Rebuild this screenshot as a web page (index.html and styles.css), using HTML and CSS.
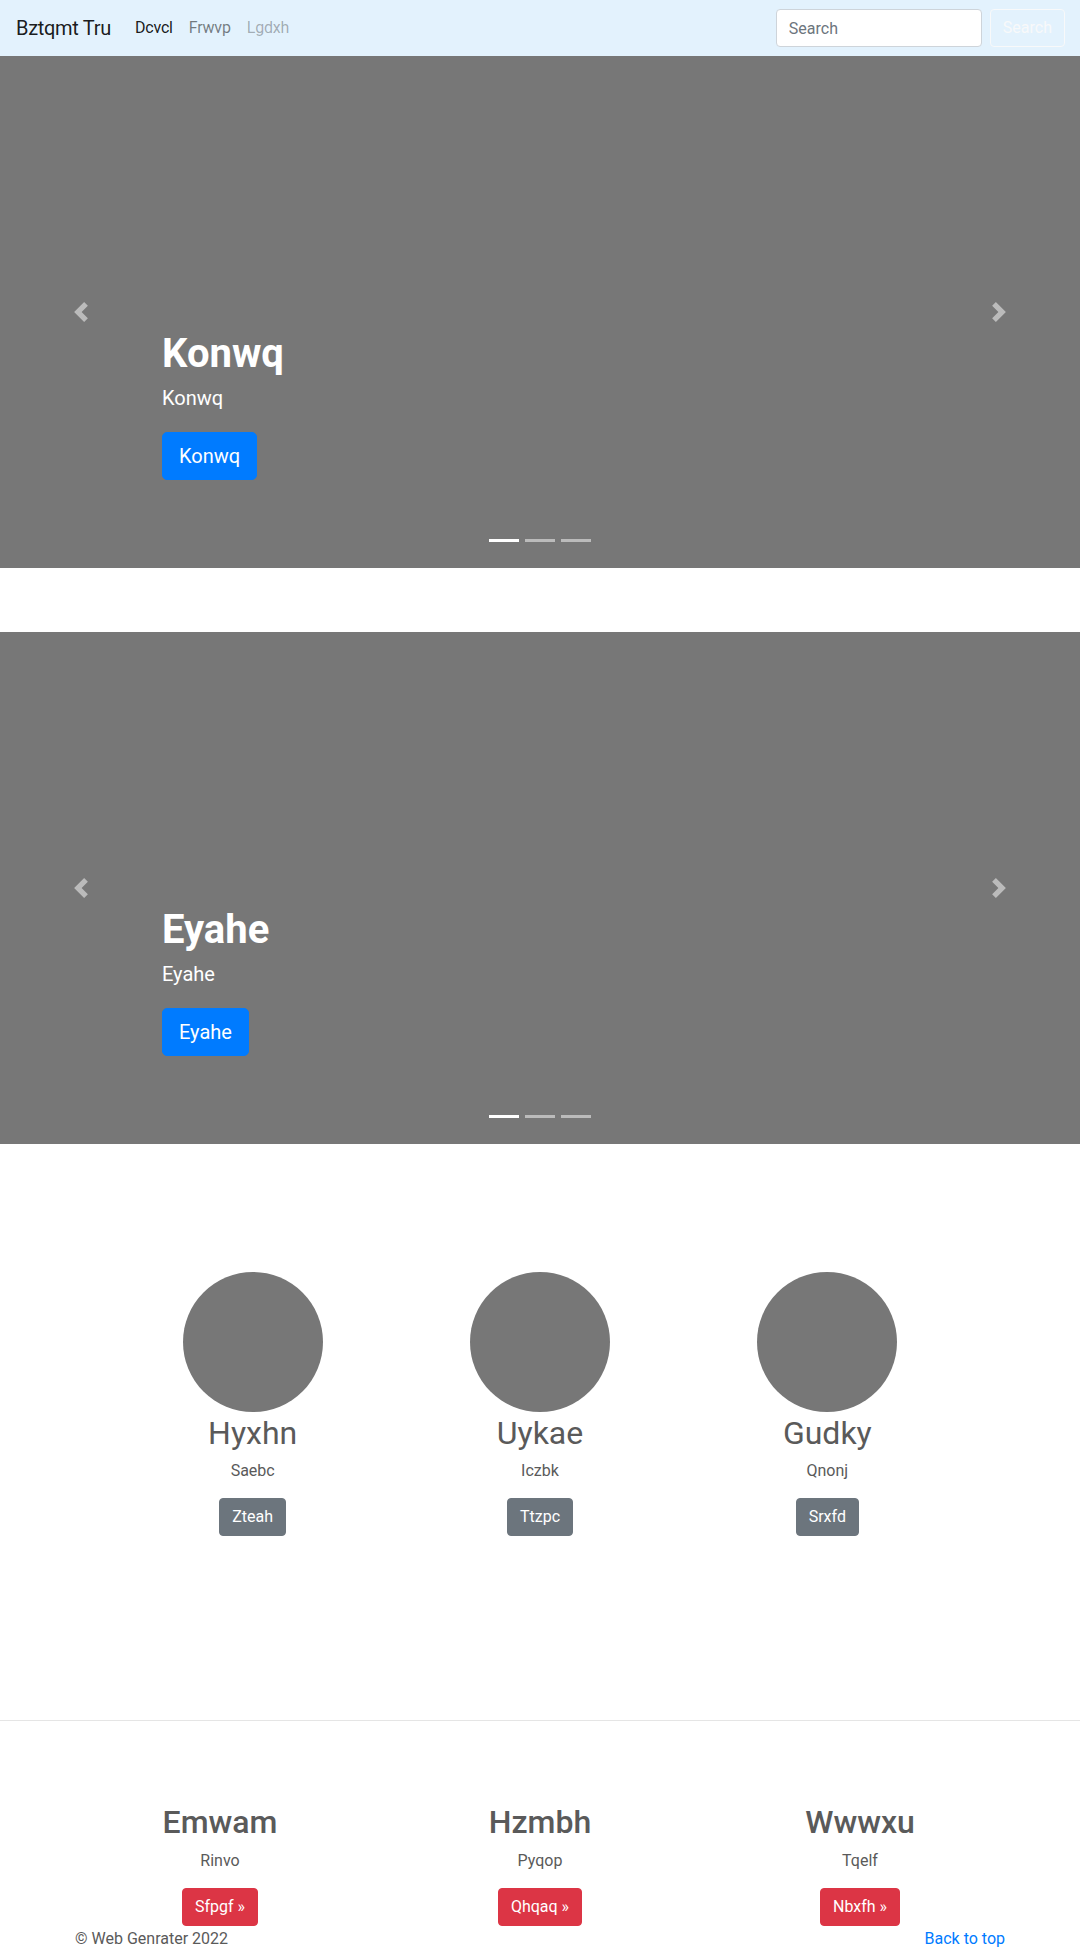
FILE: index.html
```html
<!DOCTYPE html>
<html lang="en">
<head>
<meta charset="utf-8">
<title>Bztqmt Tru</title>
<link rel="stylesheet" href="styles.css">
</head>
<body>
<header class="navbar">
  <a class="brand" href="#">Bztqmt Tru</a>
  <nav class="nav">
    <a class="nav-link active" href="#">Dcvcl</a>
    <a class="nav-link" href="#">Frwvp</a>
    <a class="nav-link disabled" href="#">Lgdxh</a>
  </nav>
  <form class="search">
    <input class="search-input" type="text" placeholder="Search">
    <button class="btn btn-outline-light" type="button">Search</button>
  </form>
</header>

<main>
  <section class="carousel">
    <a class="control control-prev" href="#"><svg width="20" height="20" viewBox="0 0 8 8"><path fill="#fff" d="M5.25 0l-4 4 4 4 1.5-1.5L4.25 4l2.5-2.5L5.25 0z"/></svg></a>
    <a class="control control-next" href="#"><svg width="20" height="20" viewBox="0 0 8 8"><path fill="#fff" d="M2.75 0l-1.5 1.5L3.75 4l-2.5 2.5L2.75 8l4-4-4-4z"/></svg></a>
    <div class="caption">
      <h1 class="caption-title">Konwq</h1>
      <p class="caption-text">Konwq</p>
      <a class="btn btn-lg btn-primary" href="#">Konwq</a>
    </div>
    <ol class="indicators">
      <li class="active"></li>
      <li></li>
      <li></li>
    </ol>
  </section>

  <section class="carousel">
    <a class="control control-prev" href="#"><svg width="20" height="20" viewBox="0 0 8 8"><path fill="#fff" d="M5.25 0l-4 4 4 4 1.5-1.5L4.25 4l2.5-2.5L5.25 0z"/></svg></a>
    <a class="control control-next" href="#"><svg width="20" height="20" viewBox="0 0 8 8"><path fill="#fff" d="M2.75 0l-1.5 1.5L3.75 4l-2.5 2.5L2.75 8l4-4-4-4z"/></svg></a>
    <div class="caption">
      <h1 class="caption-title">Eyahe</h1>
      <p class="caption-text">Eyahe</p>
      <a class="btn btn-lg btn-primary" href="#">Eyahe</a>
    </div>
    <ol class="indicators">
      <li class="active"></li>
      <li></li>
      <li></li>
    </ol>
  </section>

  <section class="marketing">
    <div class="col">
      <div class="circle"></div>
      <h2 class="m-title">Hyxhn</h2>
      <p class="m-text">Saebc</p>
      <a class="btn btn-secondary" href="#">Zteah</a>
    </div>
    <div class="col">
      <div class="circle"></div>
      <h2 class="m-title">Uykae</h2>
      <p class="m-text">Iczbk</p>
      <a class="btn btn-secondary" href="#">Ttzpc</a>
    </div>
    <div class="col">
      <div class="circle"></div>
      <h2 class="m-title">Gudky</h2>
      <p class="m-text">Qnonj</p>
      <a class="btn btn-secondary" href="#">Srxfd</a>
    </div>
  </section>

  <hr class="divider">

  <section class="features">
    <div class="col">
      <h2 class="f-title">Emwam</h2>
      <p class="m-text">Rinvo</p>
      <a class="btn btn-danger" href="#">Sfpgf &raquo;</a>
    </div>
    <div class="col">
      <h2 class="f-title">Hzmbh</h2>
      <p class="m-text">Pyqop</p>
      <a class="btn btn-danger" href="#">Qhqaq &raquo;</a>
    </div>
    <div class="col">
      <h2 class="f-title">Wwwxu</h2>
      <p class="m-text">Tqelf</p>
      <a class="btn btn-danger" href="#">Nbxfh &raquo;</a>
    </div>
  </section>
</main>

<footer class="footer">
  <p class="copy">&copy; Web Genrater 2022</p>
  <a class="top-link" href="#">Back to top</a>
</footer>
</body>
</html>
```

FILE: styles.css
```css
* { box-sizing: border-box; }

html, body {
  margin: 0;
  padding: 0;
}

body {
  font-family: Roboto, "Open Sans", sans-serif;
  font-size: 16px;
  line-height: 1.5;
  color: #5a5a5a;
  background: #fff;
}

a { text-decoration: none; }

/* Navbar */
.navbar {
  height: 56px;
  background: #e3f2fd;
  display: flex;
  align-items: center;
  padding: 0 15px 0 16px;
}

.brand {
  font-size: 20px;
  line-height: 30px;
  letter-spacing: -0.3px;
  color: rgba(0, 0, 0, 0.9);
  margin-right: 16px;
}

.nav {
  display: flex;
  flex: 1;
}

.nav-link {
  padding: 8px;
  letter-spacing: -0.2px;
  color: rgba(0, 0, 0, 0.5);
}

.nav-link.active { color: rgba(0, 0, 0, 0.9); }
.nav-link.disabled { color: rgba(0, 0, 0, 0.3); }

.search {
  display: flex;
  align-items: center;
  gap: 8px;
  margin: 0;
}

.search-input {
  width: 206px;
  height: 38px;
  padding: 6px 12px;
  font: inherit;
  color: #495057;
  background: #fff;
  border: 1px solid #ced4da;
  border-radius: 4px;
}

.search-input::placeholder { color: #6c757d; }

/* Buttons */
.btn {
  display: inline-block;
  font-family: inherit;
  font-size: 16px;
  line-height: 24px;
  padding: 6px 12px;
  border: 1px solid transparent;
  border-radius: 4px;
  background: transparent;
  color: #fff;
  vertical-align: top;
}

.btn-outline-light {
  border-color: #f8f9fa;
  color: #f8f9fa;
}

.btn-lg {
  font-size: 20px;
  line-height: 30px;
  padding: 8px 16px;
  border-radius: 5px;
}

.btn-primary { background: #007bff; border-color: #007bff; }
.btn-secondary { background: #6c757d; border-color: #6c757d; }
.btn-danger { background: #dc3545; border-color: #dc3545; }

/* Carousel */
.carousel {
  position: relative;
  height: 512px;
  background: #777;
  margin-bottom: 64px;
}

.control {
  position: absolute;
  top: 0;
  bottom: 0;
  width: 15%;
  display: flex;
  align-items: center;
  justify-content: center;
  opacity: 0.5;
}

.control svg { display: block; }

.control-prev { left: 0; }
.control-next { right: 0; }

.caption {
  position: absolute;
  left: 15%;
  right: 15%;
  bottom: 88px;
  color: #fff;
  text-align: left;
}

.caption-title {
  margin: 0 0 5px;
  font-size: 40px;
  line-height: 48px;
  font-weight: 700;
}

.caption-text {
  margin: 0 0 19px;
  font-size: 20px;
  line-height: 30px;
}

.indicators {
  position: absolute;
  left: 0;
  right: 0;
  bottom: 26px;
  margin: 0;
  padding: 0;
  list-style: none;
  display: flex;
  justify-content: center;
  gap: 6px;
}

.indicators li {
  width: 30px;
  height: 3px;
  background: rgba(255, 255, 255, 0.5);
}

.indicators li.active { background: #fff; }

/* Marketing */
.marketing {
  width: 862px;
  margin: 0 auto;
  padding-top: 64px;
  display: grid;
  grid-template-columns: repeat(3, 1fr);
}

.col {
  text-align: center;
}

.circle {
  width: 140px;
  height: 140px;
  border-radius: 50%;
  background: #777;
  margin: 0 auto;
}

.m-title {
  margin: 2px 0 7px;
  font-size: 32px;
  line-height: 38px;
  font-weight: 400;
}

.m-text {
  margin: 0 0 15px;
  font-size: 16px;
  line-height: 24px;
}

.divider {
  margin: 184px 0 0;
  border: 0;
  border-top: 1px solid rgba(0, 0, 0, 0.1);
  height: 0;
}

/* Features */
.features {
  width: 960px;
  margin: 0 auto;
  padding-top: 82px;
  display: grid;
  grid-template-columns: repeat(3, 1fr);
}

.f-title {
  margin: 0 0 8px;
  font-size: 32px;
  line-height: 38px;
  font-weight: 500;
}

/* Footer */
.footer {
  display: flex;
  justify-content: space-between;
  align-items: baseline;
  padding: 1px 75px 0 75px;
}

.copy {
  margin: 0;
}

.top-link {
  color: #007bff;
}
```
